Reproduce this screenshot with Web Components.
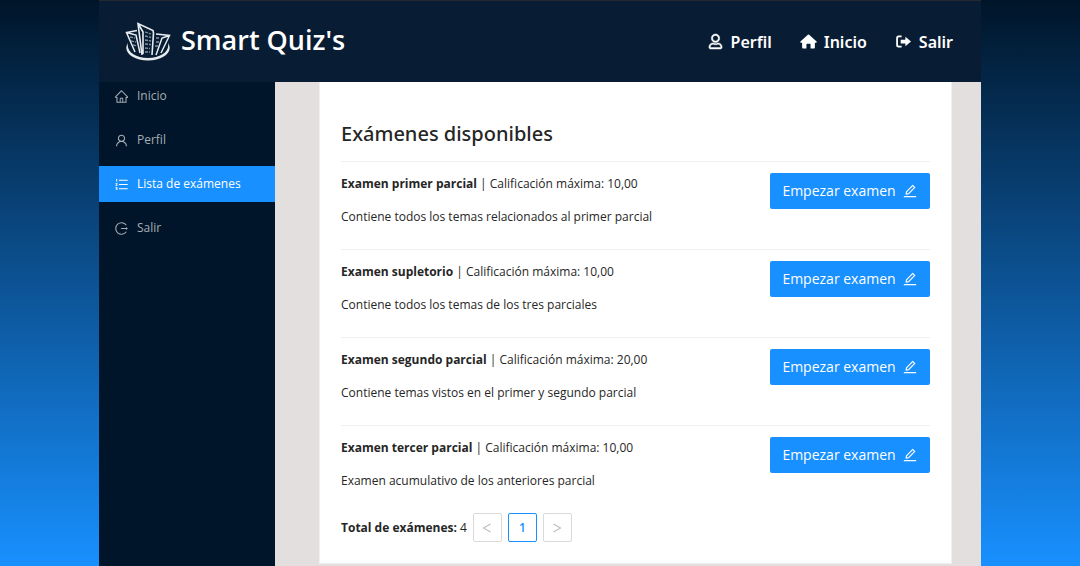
<!DOCTYPE html>
<html lang="es">
<head>
<meta charset="utf-8">
<meta name="viewport" content="width=device-width, initial-scale=1">
<title>Smart Quiz's</title>
<style>
  body {
    margin: 0;
    min-height: 100vh;
    font-family: "Open Sans", "Noto Sans", sans-serif;
    font-size: 12px;
    line-height: 22px;
    color: #262626;
    background: linear-gradient(#001529, #1890ff);
  }
</style>
</head>
<body>
<quiz-app></quiz-app>

<script>
const ICONS = {
  home: ['0 0 1024 1024', '<path d="M946.5 505L560.1 118.8l-25.9-25.9a31.5 31.5 0 00-44.4 0L77.5 505a63.9 63.9 0 00-18.8 46c.4 35.2 29.7 63.3 64.9 63.3h42.5V940h691.8V614.3h43.4c17.1 0 33.2-6.7 45.3-18.8a63.6 63.6 0 0018.7-45.3c0-17-6.7-33.1-18.8-45.2zM568 868H456V664h112v204zm217.9-325.7V868H632V640c0-22.1-17.9-40-40-40H432c-22.1 0-40 17.9-40 40v228H238.1V542.3h-96l370-369.7 23.1 23.1L882 542.3h-96.1z"/>'],
  user: ['0 0 1024 1024', '<path d="M858.5 763.6a374 374 0 00-80.6-119.5 375.63 375.63 0 00-119.5-80.6c-.4-.2-.8-.3-1.2-.5C719.5 518 760 444.7 760 362c0-137-111-248-248-248S264 225 264 362c0 82.7 40.5 156 102.8 201.1-.4.2-.8.3-1.2.5-44.8 18.9-85 46-119.5 80.6a375.63 375.63 0 00-80.6 119.5A371.7 371.7 0 00136 901.8a8 8 0 008 8.2h60c4.4 0 7.9-3.5 8-7.8 2-77.2 33-149.5 87.8-204.3 56.7-56.7 132-87.9 212.2-87.9s155.5 31.2 212.2 87.9C779 752.7 810 825 812 902.2c.1 4.4 3.6 7.8 8 7.8h60a8 8 0 008-8.2c-1-47.8-10.9-94.3-29.5-138.2zM512 534c-45.9 0-89.1-17.9-121.6-50.4S340 407.9 340 362c0-45.9 17.9-89.1 50.4-121.6S466.1 190 512 190s89.1 17.9 121.6 50.4S684 316.1 684 362c0 45.9-17.9 89.1-50.4 121.6S557.9 534 512 534z"/>'],
  list: ['0 0 1024 1024', '<path d="M336 192h600v72H336zM336 476h600v72H336zM336 760h600v72H336zM136 132h80v192h-56v-136h-24zM104 416h128v92l-68 60h68v44H104v-56l72-66v-30h-72zM104 700h128v192H104v-44h76v-30h-56v-44h56v-30h-76z"/>'],
  exit: ['0 0 1024 1024', '<g fill="none" stroke="currentColor" stroke-width="76"><path d="M838 288A394 394 0 1 0 838 736M480 512H850"/></g><path d="M820 410l130 102-130 102z"/>'],
  edit: ['0 0 1024 1024', '<path d="M257.7 752c2 0 4-.2 6-.5L431.9 722c2-.4 3.9-1.3 5.3-2.8l423.9-423.9a9.96 9.96 0 000-14.1L694.9 114.9c-1.9-1.9-4.4-2.9-7.1-2.9s-5.2 1-7.1 2.9L256.8 538.8c-1.5 1.5-2.4 3.3-2.8 5.3l-29.5 168.2a33.5 33.5 0 009.4 29.8c6.6 6.4 14.9 9.9 23.8 9.9zm67.4-174.4L687.8 215l73.3 73.3-362.7 362.6-88.9 15.7 15.6-89zM880 836H144c-17.7 0-32 14.3-32 32v36c0 4.4 3.6 8 8 8h784c4.4 0 8-3.6 8-8v-36c0-17.7-14.3-32-32-32z"/>'],
  person: ['-32 0 512 512', '<path stroke="currentColor" stroke-width="16" d="M313.6 304c-28.7 0-42.5 16-89.6 16-47.1 0-60.8-16-89.6-16C60.2 304 0 364.2 0 438.4V464c0 26.5 21.5 48 48 48h352c26.5 0 48-21.5 48-48v-25.6c0-74.2-60.2-134.4-134.4-134.4zM400 464H48v-25.6c0-47.6 38.8-86.4 86.4-86.4 14.6 0 38.3 16 89.6 16 51.7 0 74.9-16 89.6-16 47.6 0 86.4 38.8 86.4 86.4V464zM224 288c79.5 0 144-64.5 144-144S303.5 0 224 0 80 64.5 80 144s64.5 144 144 144zm0-240c52.9 0 96 43.1 96 96s-43.1 96-96 96-96-43.1-96-96 43.1-96 96-96z"/>'],
  house: ['0 0 18 16', '<path d="M9 .6a1 1 0 0 1 .7.3L17.6 8a.7.7 0 0 1-.5 1.2h-1.3v5.3a1 1 0 0 1-1 1h-3.6v-4.3a.7.7 0 0 0-.7-.7h-3a.7.7 0 0 0-.7.7v4.3H3.200a1 1 0 0 1-1-1V9.200H.9A.7.7 0 0 1 .4 8L8.300.9A1 1 0 0 1 9 .6z"/>'],
  leave: ['0 0 16 16', '<path d="M6 1.500H3A2.700 2.700 0 0 0 .2 4.200v7.600A2.700 2.700 0 0 0 3 14.500H6v-1.900H3.300a1.200 1.200 0 0 1-1.200-1.200V4.600a1.200 1.200 0 0 1 1.200-1.200H6zM10 2.900l6 5.100L10 13.100V10H5V6H10z"/>'],
  prev: ['0 0 12 12', '<path d="M9 2.500L3 6l6 3.500" fill="none" stroke="currentColor"/>'],
  next: ['0 0 12 12', '<path d="M3 2.500L9 6 3 9.500" fill="none" stroke="currentColor"/>']
};

function define(name, render) {
  customElements.define(name, class extends HTMLElement {
    connectedCallback() {
      if (this.shadowRoot) return;
      this.attachShadow({ mode: 'open' }).innerHTML = render(this);
    }
  });
}

define('quiz-icon', el => {
  const [box, body] = ICONS[el.getAttribute('name')];
  return `
    <style>
      :host { display: block; flex: none; width: var(--icon-width, 14px); height: var(--icon-height, 14px); }
      svg { display: block; width: 100%; height: 100%; fill: currentColor; overflow: visible; }
    </style>
    <svg viewBox="${box}" aria-hidden="true">${body}</svg>`;
});

define('quiz-logo', () => `
  <style>
    :host { display: block; width: 46px; height: 40px; }
    svg { display: block; width: 100%; height: 100%; }
  </style>
  <svg viewBox="0 0 46 40" fill="none" stroke="#e8ecf0" aria-hidden="true">
    <path d="M3 21C-3 30 8 38.500 23 38.500S49 30 43 21c2 8-7 15-20 15S1 29 3 21z" fill="#e8ecf0" stroke="none"/>
    <path d="M10 30L1.500 10.500 12 8.500M1.500 10.500L11 13l4 18" stroke-width="1.500"/>
    <path d="M17 33L13 1.500 28 8.500 28.500 11 27 33M13 1.500l5 8.500v22" stroke-width="1.600"/>
    <path d="M36 31l8.500-17.500L31 12M44.500 13.500L37 16l-6 17" stroke-width="1.500"/>
    <path d="M20 10l6 2M20 14l6 1.500M20 18l6 1M20 22l6 .5M20 26l5 .5M20 30l5 0M5 15l5 1M6 19l5 1M8 23l4 1M31 16l4 0M31 20l3 0M30 24l3 0" stroke-width="1.300" stroke-dasharray="3 1" stroke="#8492a2"/>
  </svg>`);

define('top-link', el => `
  <style>
    :host { display: block; --icon-width: 17px; --icon-height: 15px; }
    a { display: flex; align-items: center; gap: 7px; color: #fff; font-family: "Noto Sans", sans-serif; font-size: 16px; font-weight: 600; line-height: 24px; text-decoration: none; }
  </style>
  <a href="#"><quiz-icon name="${el.getAttribute('icon')}"></quiz-icon><slot></slot></a>`);

define('quiz-header', () => `
  <style>
    :host { display: block; position: relative; z-index: 1; }
    header { display: flex; align-items: center; justify-content: space-between; box-sizing: border-box; height: 82px; padding: 0 28px 0 26px; background: #081d33; border-top: 1px solid #24292f; }
    .brand { display: flex; align-items: flex-start; gap: 10px; }
    h1 { margin: 0; color: #fff; font-size: 27px; font-weight: 600; line-height: 36px; }
    nav { display: flex; gap: 28px; }
  </style>
  <header>
    <div class="brand"><quiz-logo></quiz-logo><h1>Smart Quiz's</h1></div>
    <nav aria-label="Principal">
      <top-link icon="person">Perfil</top-link>
      <top-link icon="house">Inicio</top-link>
      <top-link icon="leave">Salir</top-link>
    </nav>
  </header>`);

define('side-link', el => `
  <style>
    :host { display: block; color: #a6adb4; --icon-width: 15px; --icon-height: 15px; }
    :host([selected]) { color: #fff; background: #1890ff; }
    a { display: flex; align-items: center; gap: 8px; height: 36px; padding-left: 15px; color: inherit; text-decoration: none; }
  </style>
  <a href="#"${el.hasAttribute('selected') ? ' aria-current="page"' : ''}><quiz-icon name="${el.getAttribute('icon')}"></quiz-icon><slot></slot></a>`);

define('quiz-sidebar', () => `
  <style>
    :host { display: block; background: #001529; }
    nav { display: grid; gap: 8px; margin-top: -4px; }
  </style>
  <nav aria-label="Secciones">
    <side-link icon="home">Inicio</side-link>
    <side-link icon="user">Perfil</side-link>
    <side-link icon="list" selected>Lista de exámenes</side-link>
    <side-link icon="exit">Salir</side-link>
  </nav>`);

define('exam-row', el => `
  <style>
    :host { display: flex; justify-content: space-between; align-items: flex-start; gap: 16px; box-sizing: border-box; min-height: 88px; padding-top: 11px; border-top: 1px solid #f0f0f0; --icon-width: 16px; --icon-height: 16px; }
    p { margin: 0 0 11px; }
    strong { font-weight: 700; }
    button { display: flex; align-items: center; justify-content: center; gap: 6px; flex: none; width: 160px; height: 36px; padding: 0; border: 0; border-radius: 2px; background: #1890ff; color: #fff; font: inherit; font-size: 14px; }
  </style>
  <div>
    <p><strong>${el.getAttribute('name')}</strong> | Calificación máxima: ${el.getAttribute('score')}</p>
    <p><slot></slot></p>
  </div>
  <button type="button">Empezar examen <quiz-icon name="edit"></quiz-icon></button>`);

define('exam-pager', () => `
  <style>
    :host { display: flex; align-items: center; gap: 6px; }
    p { margin: 0; }
    button { display: grid; place-items: center; box-sizing: border-box; width: 29px; height: 29px; padding: 0; border: 1px solid #d9d9d9; border-radius: 2px; background: #fff; color: #bfbfbf; font: inherit; }
    button[aria-current] { border-color: #1890ff; color: #1890ff; font-weight: 600; }
  </style>
  <p><strong>Total de exámenes:</strong> 4</p>
  <button type="button" disabled aria-label="Anterior"><quiz-icon name="prev"></quiz-icon></button>
  <button type="button" aria-current="page">1</button>
  <button type="button" disabled aria-label="Siguiente"><quiz-icon name="next"></quiz-icon></button>`);

define('exam-list', () => `
  <style>
    :host { display: block; padding: 36px 21px 21px; background: #fff; border: 1px solid #f0f0f0; border-top: 0; }
    h2 { margin: 0 0 11px; font-family: "Noto Sans", sans-serif; font-size: 20px; font-weight: 500; line-height: 32px; }
  </style>
  <h2>Exámenes disponibles</h2>
  <exam-row name="Examen primer parcial" score="10,00">Contiene todos los temas relacionados al primer parcial</exam-row>
  <exam-row name="Examen supletorio" score="10,00">Contiene todos los temas de los tres parciales</exam-row>
  <exam-row name="Examen segundo parcial" score="20,00">Contiene temas vistos en el primer y segundo parcial</exam-row>
  <exam-row name="Examen tercer parcial" score="10,00">Examen acumulativo de los anteriores parcial</exam-row>
  <exam-pager></exam-pager>`);

define('quiz-app', () => `
  <style>
    :host { display: flex; flex-direction: column; min-height: 100vh; margin: 0 99px; }
    .body { flex: 1; display: grid; grid-template-columns: 176px 1fr; }
    main { padding: 0 29px 2px 44px; background: #e3dfde; }
  </style>
  <quiz-header></quiz-header>
  <div class="body">
    <quiz-sidebar></quiz-sidebar>
    <main><exam-list></exam-list></main>
  </div>`);
</script>
</body>
</html>
